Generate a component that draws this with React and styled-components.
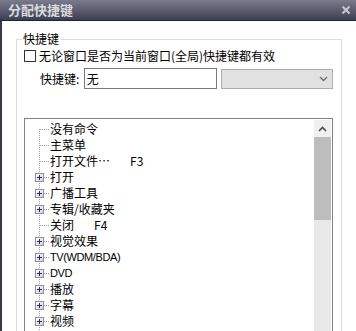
import React from 'react';
import styled, { createGlobalStyle } from 'styled-components';

const GlobalStyle = createGlobalStyle`
  html, body {
    margin: 0;
    padding: 0;
    background: #fff;
  }
  body {
    font-family: "Noto Sans CJK SC", "Liberation Sans", sans-serif;
    font-size: 12px;
    color: #000;
  }
`;

// styles
const Window = styled.div`
  width: 356px;
  height: 331px;
  overflow: hidden;
  display: flex;
  flex-direction: column;
  background: #fff;
`;
const TitleBar = styled.div`
  box-sizing: border-box;
  height: 21px;
  flex-shrink: 0;
  display: flex;
  align-items: center;
  justify-content: space-between;
  padding: 0 5px 0 8px;
  background: linear-gradient(#7a7b8d, #3d3e50);
  border-bottom: 1px solid #22232c;
`;
const Title = styled.span`
  font-size: 13px;
  font-weight: bold;
  color: #dadade;
  line-height: 20px;
`;
const Body = styled.div`
  flex: 1;
  border-left: 2px solid #3a3b46;
  padding: 11px 14px 0 14px;
`;
const Group = styled.fieldset`
  margin: 0;
  min-width: 0;
  border: 1px solid #dcdcdc;
  padding: 0 8px 20px 7px;
`;
const Legend = styled.legend`
  padding: 0 1px;
  margin-left: -2px;
  font-size: 12px;
  line-height: 14px;
`;
const CheckRow = styled.label`
  display: flex;
  align-items: center;
  height: 14px;
  margin-top: 3px;
  line-height: 14px;
`;
const CheckBox = styled.span`
  box-sizing: border-box;
  width: 12px;
  height: 12px;
  border: 1px solid #333;
  background: #fff;
  margin-right: 3px;
  flex-shrink: 0;
`;
const ShortcutRow = styled.div`
  display: flex;
  align-items: center;
  margin-top: 5px;
  padding-left: 16px;
`;
const Label = styled.span`
  width: 44px;
  line-height: 14px;
`;
const TextBox = styled.div`
  box-sizing: border-box;
  width: 134px;
  height: 21px;
  border: 1px solid #7a7a7a;
  padding: 0 2px;
  display: flex;
  align-items: center;
  background: #fff;
`;
const Select = styled.div`
  box-sizing: border-box;
  width: 112px;
  height: 20px;
  margin-left: 4px;
  border: 1px solid #adadad;
  background: #e1e1e1;
  display: flex;
  align-items: center;
  justify-content: flex-end;
  padding-right: 4px;
`;
const Tree = styled.div`
  box-sizing: border-box;
  margin-top: 29px;
  height: 240px;
  border: 1px solid #828282;
  padding: 1px;
  display: flex;
  background: #fff;
`;
const List = styled.div`
  flex: 1;
  padding-top: 1px;
`;
const Row = styled.div`
  display: flex;
  align-items: center;
  height: 16px;
  line-height: 16px;
  white-space: nowrap;
`;
const ItemText = styled.span`
  ${(p) =>
    p.$latin &&
    `
    font-family: "Liberation Sans", sans-serif;
    font-size: 11px;
    letter-spacing: -0.4px;
  `}
`;
const Key = styled.span`
  margin-left: 20px;
`;
const ScrollBar = styled.div`
  width: 17px;
  display: flex;
  flex-direction: column;
  background: #e9e9e9;
`;
const ScrollButton = styled.div`
  height: 17px;
  background: #f0f0f0;
  display: flex;
  align-items: center;
  justify-content: center;
`;
const Thumb = styled.div`
  height: 83px;
  background: #bdbdbd;
`;

const items = [
  { text: '没有命令' },
  { text: '主菜单' },
  { text: '打开文件…', key: 'F3' },
  { text: '打开', folder: true },
  { text: '广播工具', folder: true },
  { text: '专辑/收藏夹', folder: true },
  { text: '关闭', key: 'F4' },
  { text: '视觉效果', folder: true },
  { text: 'TV(WDM/BDA)', folder: true, latin: true },
  { text: 'DVD', folder: true, latin: true },
  { text: '播放', folder: true },
  { text: '字幕', folder: true },
  { text: '视频', folder: true },
  { text: '声音', folder: true },
];

function Connector({ folder, first }) {
  return (
    <svg width="24" height="16" style={{ flexShrink: 0 }} shapeRendering="crispEdges">
      <line x1="13.5" y1={first ? 8 : 0} x2="13.5" y2="16" stroke="#a0a0a0" strokeDasharray="1 1" />
      <line x1={folder ? 18 : 14} y1="8.5" x2="23" y2="8.5" stroke="#a0a0a0" strokeDasharray="1 1" />
      {folder && (
        <g>
          <defs>
            <linearGradient id="pbox" x1="0" y1="0" x2="1" y2="1">
              <stop offset="0" stopColor="#ffffff" />
              <stop offset="1" stopColor="#d4d4d4" />
            </linearGradient>
          </defs>
          <rect x="9.5" y="4.5" width="8" height="8" fill="url(#pbox)" stroke="#8f8f8f" />
          <line x1="11" y1="8.5" x2="16" y2="8.5" stroke="#2a2a5a" />
          <line x1="13.5" y1="6" x2="13.5" y2="11" stroke="#2a2a5a" />
        </g>
      )}
    </svg>
  );
}

function App() {
  return (
    <Window>
      <GlobalStyle />
      <TitleBar>
        <Title>分配快捷键</Title>
        <svg width="10" height="10" viewBox="0 0 10 10">
          <path d="M1.5 1.5 L8.5 8.5 M8.5 1.5 L1.5 8.5" stroke="#c4c4cc" strokeWidth="2.2" />
        </svg>
      </TitleBar>

      <Body>
        <Group>
          <Legend>快捷键</Legend>
          <CheckRow>
            <CheckBox />
            无论窗口是否为当前窗口(全局)快捷键都有效
          </CheckRow>
          <ShortcutRow>
            <Label>快捷键:</Label>
            <TextBox>无</TextBox>
            <Select>
              <svg width="9" height="6" viewBox="0 0 9 6">
                <path d="M1 1 L4.5 4.5 L8 1" fill="none" stroke="#6a6a6a" strokeWidth="1.3" />
              </svg>
            </Select>
          </ShortcutRow>

          <Tree>
            <List>
              {items.map((it, i) => (
                <Row key={it.text}>
                  <Connector folder={it.folder} first={i === 0} />
                  <ItemText $latin={it.latin}>{it.text}</ItemText>
                  {it.key && <Key>{it.key}</Key>}
                </Row>
              ))}
            </List>
            <ScrollBar>
              <ScrollButton>
                <svg width="9" height="6" viewBox="0 0 9 6">
                  <path d="M1 5 L4.5 1.5 L8 5" fill="none" stroke="#4a4a4a" strokeWidth="1.6" />
                </svg>
              </ScrollButton>
              <Thumb />
            </ScrollBar>
          </Tree>
        </Group>
      </Body>
    </Window>
  );
}

export default App;
